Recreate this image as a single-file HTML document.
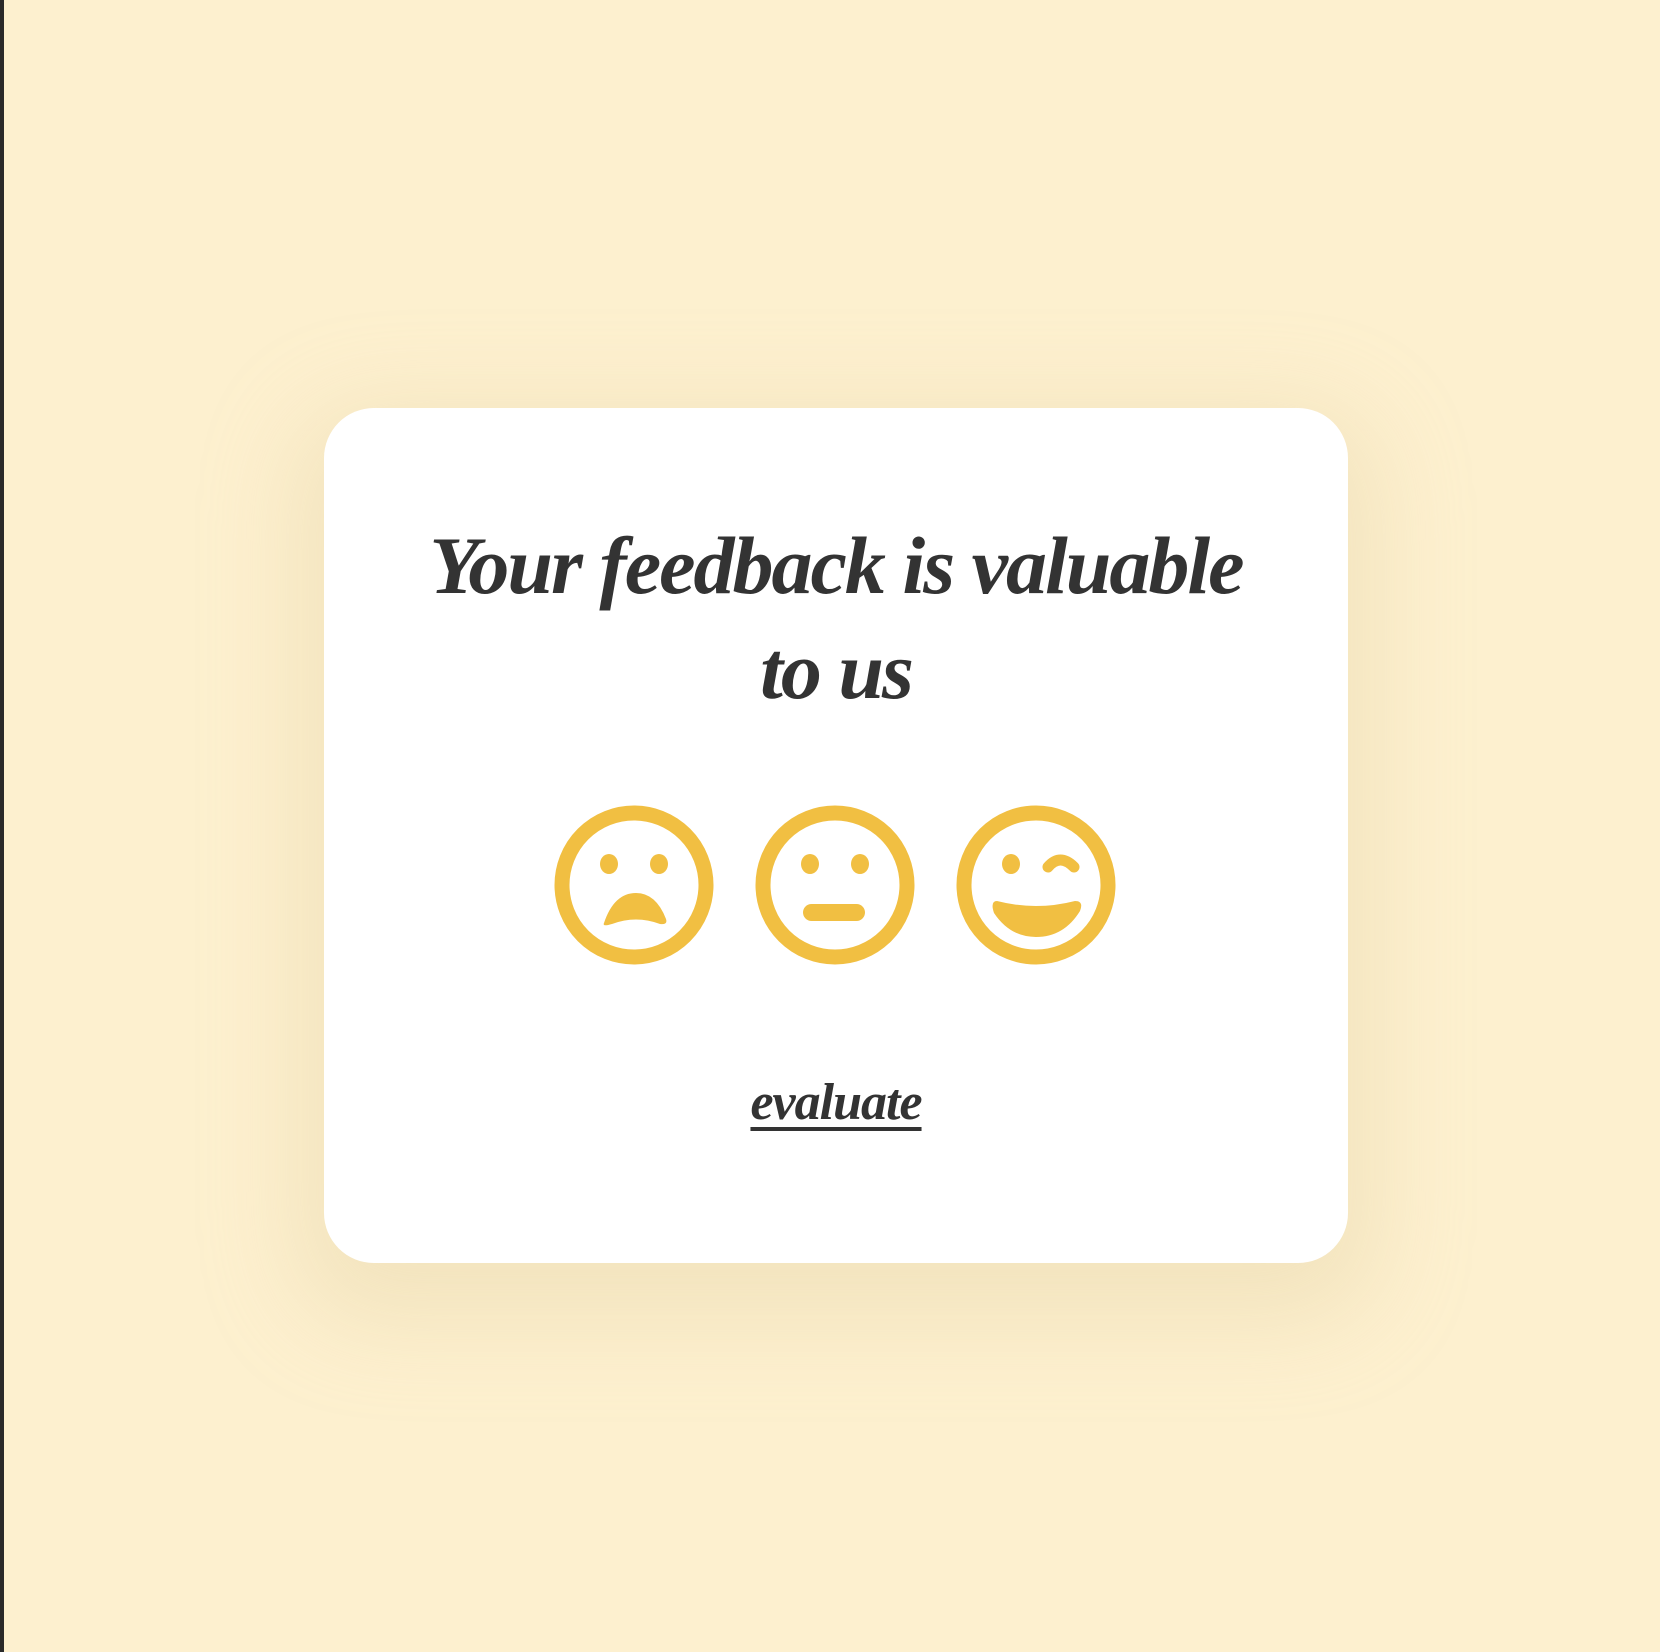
<!DOCTYPE html>
<html><head><style>
html,body{margin:0;padding:0;}
body{width:1660px;height:1652px;background:#fdf0cf;position:relative;overflow:hidden;font-family:"Liberation Serif",serif;}
.strip{position:absolute;left:0;top:0;width:4px;height:1652px;background:#2a2a2a;}
.card{position:absolute;left:324px;top:408px;width:1024px;height:855px;background:#fff;border-radius:50px;box-shadow:0 30px 90px 30px rgba(225,205,160,0.35);}
h1{position:absolute;left:0;top:105px;width:1024px;margin:0;text-align:center;font-style:italic;font-weight:bold;font-size:82px;line-height:105px;color:#333;letter-spacing:-2px;}
.faces{position:absolute;left:230px;top:397px;}
.ev{position:absolute;left:0;width:1024px;top:665px;text-align:center;font-style:italic;font-weight:bold;font-size:52px;color:#333;text-decoration:underline;text-decoration-thickness:4px;text-underline-offset:8px;letter-spacing:-1px;}
</style></head><body>
<div class="strip"></div>
<div class="card">
<h1>Your feedback is valuable<br>to us</h1>
<svg class="faces" width="600" height="170" viewBox="0 0 600 170">
 <g fill="none" stroke="#f1bf42" stroke-width="15">
  <circle cx="80" cy="80" r="72"/><circle cx="281" cy="80" r="72"/><circle cx="482" cy="80" r="72"/>
 </g>
 <g fill="#f1bf42">
  <ellipse cx="55" cy="59" rx="9" ry="10"/><ellipse cx="105" cy="59" rx="9" ry="10"/>
  <path d="M50 118 Q60 88 82 88 Q102 88 112 114 Q114 120 106 119 Q82 110 58 119 Q48 122 50 118Z"/>
  <ellipse cx="256" cy="59" rx="9" ry="10"/><ellipse cx="306" cy="59" rx="9" ry="10"/>
  <rect x="249" y="99" width="62" height="17" rx="8.5"/>
  <ellipse cx="457" cy="59" rx="9" ry="10"/>
  <path d="M494 62 Q506 48 520 62" fill="none" stroke="#f1bf42" stroke-width="11" stroke-linecap="round"/>
  <path d="M443 96 Q482 106 521 96 Q530 96 526 106 Q510 132 482 132 Q456 132 440 108 Q436 96 443 96Z"/>
 </g>
</svg>
<div class="ev">evaluate</div>
</div>
</body></html>
